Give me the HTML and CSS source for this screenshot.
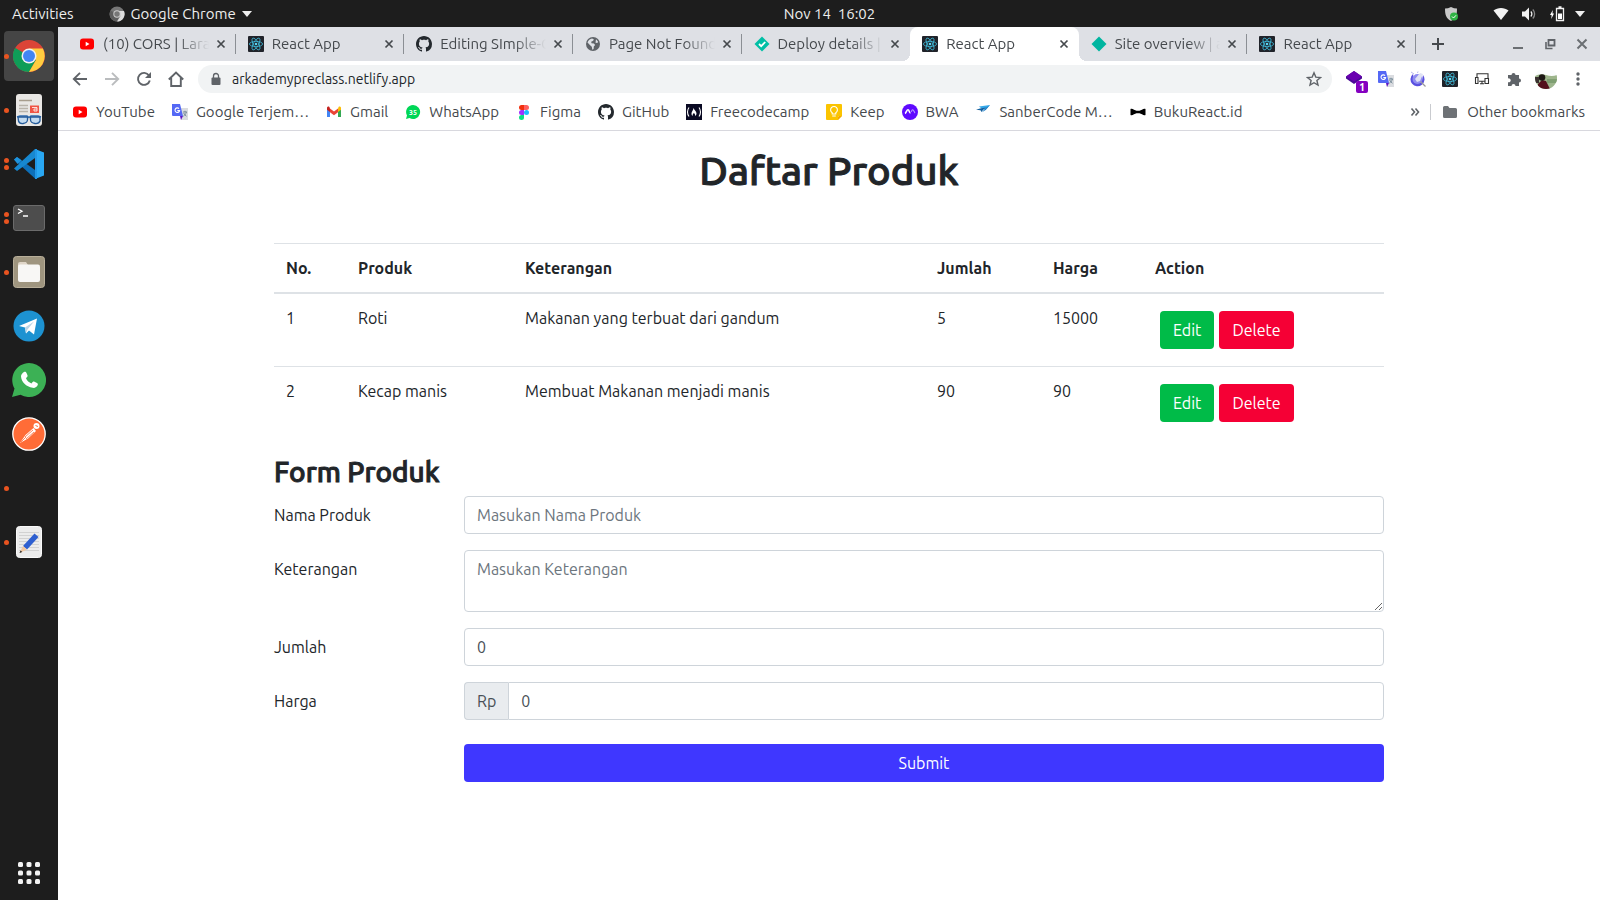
FILE: index.html
```html
<!DOCTYPE html>
<html lang="id">
<head>
<meta charset="utf-8">
<title>React App</title>
<link rel="stylesheet" href="styles.css">
</head>
<body>
<svg class="sprite" aria-hidden="true">
  <symbol id="i-youtube" viewBox="0 0 16 16"><rect x="1" y="2.500" width="14" height="11" rx="3" fill="#f00"/><path d="M6.700 5.800v4.400L10.500 8z" fill="#fff"/></symbol>
  <symbol id="i-react" viewBox="0 0 16 16"><rect width="16" height="16" rx="1" fill="#20232a"/><g fill="none" stroke="#3fb9d8" stroke-width=".8"><ellipse cx="8" cy="8" rx="6.600" ry="2.600"/><ellipse cx="8" cy="8" rx="6.600" ry="2.600" transform="rotate(60 8 8)"/><ellipse cx="8" cy="8" rx="6.600" ry="2.600" transform="rotate(120 8 8)"/></g><circle cx="8" cy="8" r="1.300" fill="#5ad4f2"/></symbol>
  <symbol id="i-github" viewBox="0 0 16 16"><path fill="#24292e" d="M8 0C3.580 0 0 3.580 0 8c0 3.540 2.290 6.530 5.470 7.590.4.070.55-.17.55-.38 0-.19-.01-.82-.01-1.490-2.010.37-2.530-.49-2.690-.94-.09-.23-.48-.94-.82-1.130-.28-.15-.68-.52-.01-.53.63-.01 1.080.58 1.230.82.72 1.210 1.870.87 2.330.66.07-.52.28-.87.51-1.070-1.780-.2-3.640-.89-3.640-3.950 0-.87.31-1.590.82-2.150-.08-.2-.36-1.020.08-2.120 0 0 .67-.21 2.200.82.64-.18 1.320-.27 2-.27s1.360.09 2 .27c1.530-1.040 2.200-.82 2.200-.82.44 1.100.16 1.920.08 2.120.51.56.82 1.270.82 2.150 0 3.070-1.870 3.750-3.650 3.950.29.25.54.73.54 1.480 0 1.070-.01 1.930-.01 2.200 0 .21.15.46.55.38A8.010 8.010 0 0 0 16 8c0-4.420-3.580-8-8-8z"/></symbol>
  <symbol id="i-globe" viewBox="0 0 16 16"><circle cx="8" cy="8" r="7" fill="#5f6368"/><path fill="#dee1e6" d="M2.500 6.500C3.300 4.200 5 3 7 2.600l1.800.7-.6 1.500-2 .9.300 1.500 2.400.2 1.200 1.600-1.300 1.500-.2 2.600-1.300.6-.5-3-1.900-1.700zM11 3.300l2 2.200-.5 1.600-2-.4z"/></symbol>
  <symbol id="i-netlify-ok" viewBox="0 0 16 16"><path d="M8 .5 15.500 8 8 15.500.5 8z" fill="#00bfa5"/><path d="m5 8 2.200 2.200 4-4.200" fill="none" stroke="#fff" stroke-width="1.800"/></symbol>
  <symbol id="i-netlify" viewBox="0 0 16 16"><path d="M8 .5 15.500 8 8 15.500.5 8z" fill="#00b5a0"/></symbol>
  <symbol id="i-close" viewBox="0 0 16 16"><path d="m4.500 4.500 7 7m0-7-7 7" fill="none" stroke="#45494d" stroke-width="1.700"/></symbol>
  <symbol id="i-translate" viewBox="0 0 16 16"><path d="M7 4h9v12H9z" fill="#dadce0"/><path d="M0 0h8l3 12H1a1 1 0 0 1-1-1z" fill="#5468f5"/><path d="M8 12h3l-2 4z" fill="#5c16c5"/><path d="M7 4.600a2.300 2.300 0 1 0 .6 2H5.300" fill="none" stroke="#fff" stroke-width="1.100"/><path d="M11 8h4m-2-1.200V8m1.400 0c-.5 2-1.600 3.200-3 4.200m.3-3.200c.6 1.400 1.600 2.500 2.800 3.200" fill="none" stroke="#6b8190" stroke-width=".9"/></symbol>
  <symbol id="i-gmail" viewBox="0 0 16 16"><path d="M1 4v9h3V6.500z" fill="#4285f4"/><path d="M15 4v9h-3V6.500z" fill="#34a853"/><path d="M12 4.500V8l3-2.300V4c0-1.300-1.500-1.900-2.400-1.100z" fill="#fbbc04"/><path d="M4 4.500v3.700l4 3 4-3V4.500L8 7.500z" fill="#ea4335"/><path d="M1 4v1.700L4 8V4.500l-.6-1.600C2.500 2.100 1 2.700 1 4z" fill="#c5221f"/></symbol>
  <symbol id="i-figma" viewBox="0 0 16 16"><path d="M8 1H5.500a2.500 2.500 0 0 0 0 5H8z" fill="#f2300e"/><path d="M8 1h2.500a2.500 2.500 0 0 1 0 5H8z" fill="#ff6060"/><path d="M8 6H5.500a2.500 2.500 0 0 0 0 5H8z" fill="#a030ff"/><circle cx="10.500" cy="8.500" r="2.500" fill="#1abcfe"/><path d="M8 11H5.500A2.500 2.500 0 1 0 8 13.500z" fill="#0ae083"/></symbol>
  <symbol id="i-fcc" viewBox="0 0 16 16"><path d="M0 0h16v16H0z" fill="#0a0a23"/><path d="M3 3.500C1 6 1 10 3 12.500m10-9c2 2.500 2 6.500 0 9" fill="none" stroke="#fff" stroke-width="1.100"/><path d="M7.500 4c.8 2 3 3.500 3 5.600 0 1.200-.6 1.900-1.400 2.400.2-1.500-.3-2.300-1.300-3-.8.800-1.300 1.800-1.200 3C5.800 11.500 5.500 10.600 5.500 9.600c0-2 1.700-2.800 2-5.600z" fill="#fff"/></symbol>
  <symbol id="i-keep" viewBox="0 0 16 16"><path d="M1 0h14a1 1 0 0 1 1 1v11l-4 4H1a1 1 0 0 1-1-1V1a1 1 0 0 1 1-1z" fill="#fbc400"/><path d="M16 12h-4v4z" fill="#fff"/><path d="M16 12h-3a1 1 0 0 0-1 1v3z" fill="#f5a900"/><path d="M6.200 10V8.800a3.400 3.400 0 1 1 3.600 0V10zM6.200 12h3.600" fill="none" stroke="#fff" stroke-width="1.100"/></symbol>
  <symbol id="i-bwa" viewBox="0 0 16 16"><circle cx="8" cy="8" r="8" fill="#5f0aff"/><path d="M3 9.500C4.200 9 4.700 5.800 6 5.800c1.300 0 1.300 3.200 2.500 3.200" fill="none" stroke="#fff" stroke-width="1.600"/><path d="M9.200 7.800c.6-1 .8-2 1.500-2 1 0 1.300 2.200 2.300 3.200" fill="none" stroke="#b79aff" stroke-width="1.100"/></symbol>
  <symbol id="i-sanber" viewBox="0 0 16 16"><path d="M4 2.500 15 1l-3 3-4.500 1.200z" fill="#35a8e8"/><path d="m1 5.800 4-1.300 6-1L8 6 6.500 8l-1-1.700z" fill="#14609f"/><path d="m15 1-5 3.500L7 8.200 11 5.800z" fill="#1c7fc8"/></symbol>
  <symbol id="i-bowtie" viewBox="0 0 16 16"><path d="M.5 5c2-1 4 1.500 6 1.800h3C11.500 6.500 13.500 4 15.500 5v6c-2 1-4-1.500-6-1.800h-3C4.500 9.500 2.500 12 .5 11z" fill="#000"/></symbol>
  <symbol id="i-folder" viewBox="0 0 16 16"><path d="M1 3.500A1.500 1.500 0 0 1 2.500 2H6l1.500 2h6A1.500 1.500 0 0 1 15 5.500v7a1.500 1.500 0 0 1-1.500 1.500h-11A1.500 1.500 0 0 1 1 12.500z" fill="#6e7276"/></symbol>
  <symbol id="i-chrome-ball" viewBox="0 0 32 32"><circle cx="16" cy="16" r="16" fill="#db4437"/><path d="M2.140 8A16 16 0 0 0 16 32l7-12.200L16 16z" fill="#0f9d58"/><path d="M16 32A16 16 0 0 0 29.860 8.500H16l7 11.500z" fill="#ffcd40"/><path d="M2.140 8 9.500 20 16 24l-1-8z" fill="#0f9d58"/><circle cx="16" cy="16" r="7.500" fill="#f1f1f1"/><circle cx="16" cy="16" r="6" fill="#4285f4"/></symbol>
</svg>

<div class="desktop">
  <header class="topbar">
    <div class="topbar-left">
      <button class="top-btn">Activities</button>
      <button class="top-btn top-app">
        <svg class="icon" viewBox="0 0 16 16"><circle cx="8" cy="8" r="7.500" fill="#777"/><path d="M1.500 4.500A7.500 7.500 0 0 0 8 15.500l3-6z" fill="#5d5d5d"/><path d="M8 15.500A7.500 7.500 0 0 0 15 5H8l3.500 5z" fill="#ddd"/><circle cx="8" cy="8" r="3.700" fill="#ccc"/><circle cx="8" cy="8" r="2.700" fill="#777"/></svg>
        Google Chrome
        <svg class="caret" viewBox="0 0 10 6"><path d="M0 0h10L5 6z" fill="#eee"/></svg>
      </button>
    </div>
    <time class="clock">Nov 14&nbsp; 16:02</time>
    <div class="topbar-right">
      <svg class="icon tray-shield" viewBox="0 0 16 16"><path d="M8 1c2 1 4 1.500 6 1.500 0 6-1 10-6 12.500C3 12.500 2 8.500 2 2.500 4 2.500 6 2 8 1z" fill="#c9c9c9"/><circle cx="11" cy="10.500" r="4" fill="#2fb344"/><path d="m9 10.500 1.500 1.500 2.500-2.700" fill="none" stroke="#fff"/></svg>
      <svg class="icon" viewBox="0 0 16 16"><path d="M.5 4.500C4.500 1 11.500 1 15.500 4.500L8 14z" fill="#f2f2f2"/></svg>
      <svg class="icon" viewBox="0 0 16 16"><path d="M1 5.500h3l4-4v13l-4-4H1z" fill="#f2f2f2"/><path d="M9.800 5.500a3.500 3.500 0 0 1 0 5" fill="none" stroke="#f2f2f2" stroke-width="1.300"/><path d="M11.800 3.500a6.500 6.500 0 0 1 0 9" fill="none" stroke="#888" stroke-width="1.300"/></svg>
      <svg class="icon" viewBox="0 0 16 16"><path d="M7.500 2.500h7v12h-7zM9.500 1h3" fill="none" stroke="#f2f2f2" stroke-width="1.300"/><path d="M9 7.500h4V13H9z" fill="#fff"/><path d="M3.800 4 1 9h1.600l-.3 4L5 7.500H3.500z" fill="#fff"/></svg>
      <svg class="caret tray-caret" viewBox="0 0 10 6"><path d="M0 0h10L5 6z" fill="#eee"/></svg>
    </div>
  </header>

  <nav class="dock" aria-label="Dock">
    <button class="dock-item dock-active" aria-label="Google Chrome"><span class="dots"><i></i></span><svg class="app" viewBox="0 0 32 32"><use href="#i-chrome-ball"/></svg></button>
    <button class="dock-item" aria-label="Document viewer"><span class="dots"><i></i></span>
      <svg class="app" viewBox="0 0 32 32"><rect x="3" width="26" height="32" rx="3" fill="#e9e7e4"/><path d="M6 6.500h13" stroke="#a79d8d" stroke-width="1.500"/><path d="M6 11.500h9m-9 3h9m-9 3h9" stroke="#b9b4aa" stroke-width="1.300"/><path d="M17 11.500h9v7.500h-9z" fill="#f05545"/><path d="M19 13.500h5v3.500h-3v-2h3" fill="none" stroke="#fff" stroke-width=".8"/><path d="m4 23 3-1h7l2 1.500L18 22h7l3 1" fill="none" stroke="#2e6cb0" stroke-width="1.500"/><path d="M5 23h9.500v3c-.5 4-8 5-9 1zM17.500 23H27v4c-1.500 4-9 3-9.500-1z" fill="#c3dbf0" stroke="#245b9a" stroke-width="1.300"/></svg></button>
    <button class="dock-item" aria-label="Visual Studio Code"><span class="dots"><i></i><i></i></span>
      <svg class="app" viewBox="0 0 32 32"><path d="M1 11.500 4 9l18 13v8.500z" fill="#0d6fb8"/><path d="M1 20.500 4 23 22 10V1z" fill="#1788d0"/><path d="M1 11.500 4 9l4.500 3.300-4 3.700z" fill="#1e93dc"/><path d="M22 1 31 4.500v23L22 31z" fill="#29a7f2"/><path d="M22 1v30l2 0V1z" fill="#2196e4"/></svg></button>
    <button class="dock-item" aria-label="Terminal"><span class="dots"><i></i><i></i></span>
      <svg class="app" viewBox="0 0 32 32"><rect x=".5" y="3.500" width="31" height="25" rx="2.500" fill="#4d4d4d" stroke="#6b6b6b"/><path d="m5 7 4 2.300L5 11.500M10 14h5" fill="none" stroke="#fff" stroke-width="1.300"/></svg></button>
    <button class="dock-item" aria-label="Files"><span class="dots"><i></i></span>
      <svg class="app" viewBox="0 0 32 32"><rect x=".5" y=".5" width="31" height="31" rx="3" fill="#9f957f" stroke="#b8ae99"/><path d="M5 8q0-2 2-2h6l2 3v5H5z" fill="#e0d6c8"/><rect x="5" y="8.500" width="22" height="17.500" rx="2" fill="#f8f7f5"/></svg></button>
    <button class="dock-item" aria-label="Telegram"><span class="dots"></span>
      <svg class="app" viewBox="0 0 32 32"><circle cx="16" cy="16" r="15.500" fill="#1d92d1"/><path d="m6 16 18-7.500-3 16-5-4-3 3-1-6z" fill="#fff"/><path d="m12 17.500 9-6-6.500 8-1.500 4z" fill="#bcd5e6"/></svg></button>
    <button class="dock-item" aria-label="WhatsApp"><span class="dots"></span>
      <svg class="app app-wide" viewBox="0 0 34 34"><path d="M17 0a17 17 0 1 1-8.500 31.700L0 34l2.500-8.500A17 17 0 0 1 17 0z" fill="#3cb155"/><path d="M12 9c1-.7 2-.3 2.500 1l1 2.300c.3 1-.2 1.700-1.500 3 1 2.500 3 4.300 5.500 5.200 1.300-1.800 2-2.200 3-1.700l2.500 1.200c1 .5 1 1.200.7 2-.7 2-3 3.200-5 2.800C14 23.700 9.500 19 9 13.500 9 11.500 10.500 10 12 9z" fill="#fff"/></svg></button>
    <button class="dock-item" aria-label="Postman"><span class="dots"></span>
      <svg class="app app-wide" viewBox="0 0 34 34"><circle cx="17" cy="17" r="16.200" fill="#ff6c37" stroke="#fff" stroke-width="1.300"/><circle cx="24.500" cy="9" r="3" fill="#fff"/><path d="m8 26 5.500-8 8-7 2.500 3-8 7.500z" fill="#fff"/><path d="m13 20 8-7m-7 9 8-7M9 25l5-5" stroke="#ff6c37" stroke-width=".8"/><path d="m23.500 8.500 2.500 1" stroke="#ff6c37"/></svg></button>
    <button class="dock-item" aria-label="Running application"><span class="dots"><i></i></span></button>
    <button class="dock-item" aria-label="Text editor"><span class="dots"><i></i></span>
      <svg class="app" viewBox="0 0 32 32"><rect x="3.500" y=".5" width="25" height="31" rx="3" fill="#ececec" stroke="#fafafa"/><path d="M6 6.500h20M6 9.500h20M6 12.500h20M6 15.500h20M6 18.500h20M6 21.500h20M6 24.500h20" stroke="#d2d2d2"/><path d="m10 20 11.500-12.500 4 3.500-11.500 12.500z" fill="#2e5fd0"/><path d="m10 20 4 3.500L6.500 27z" fill="#f1c7a0"/><path d="m7.600 24.500 1.600 1.400-2.700 1.100z" fill="#222"/></svg></button>
    <button class="dock-item dock-apps" aria-label="Show applications">
      <svg class="app" viewBox="0 0 32 32" fill="#f2f2f2"><rect x="5" y="5" width="5" height="5" rx="1.500"/><rect x="13.500" y="5" width="5" height="5" rx="1.500"/><rect x="22" y="5" width="5" height="5" rx="1.500"/><rect x="5" y="13.500" width="5" height="5" rx="1.500"/><rect x="13.500" y="13.500" width="5" height="5" rx="1.500"/><rect x="22" y="13.500" width="5" height="5" rx="1.500"/><rect x="5" y="22" width="5" height="5" rx="1.500"/><rect x="13.500" y="22" width="5" height="5" rx="1.500"/><rect x="22" y="22" width="5" height="5" rx="1.500"/></svg></button>
  </nav>

  <div class="browser">
    <div class="tabstrip">
      <div class="tabs">
        <div class="tab"><svg class="icon"><use href="#i-youtube"/></svg><span class="tab-title">(10) CORS | Laravel</span><button class="tab-close" aria-label="Close tab"><svg class="icon"><use href="#i-close"/></svg></button></div>
        <div class="tab"><svg class="icon"><use href="#i-react"/></svg><span class="tab-title">React App</span><button class="tab-close" aria-label="Close tab"><svg class="icon"><use href="#i-close"/></svg></button></div>
        <div class="tab"><svg class="icon"><use href="#i-github"/></svg><span class="tab-title">Editing SImple-CRUD</span><button class="tab-close" aria-label="Close tab"><svg class="icon"><use href="#i-close"/></svg></button></div>
        <div class="tab"><svg class="icon"><use href="#i-globe"/></svg><span class="tab-title">Page Not Found</span><button class="tab-close" aria-label="Close tab"><svg class="icon"><use href="#i-close"/></svg></button></div>
        <div class="tab tab-before"><svg class="icon"><use href="#i-netlify-ok"/></svg><span class="tab-title">Deploy details | ark</span><button class="tab-close" aria-label="Close tab"><svg class="icon"><use href="#i-close"/></svg></button></div>
        <div class="tab tab-current"><svg class="icon"><use href="#i-react"/></svg><span class="tab-title">React App</span><button class="tab-close" aria-label="Close tab"><svg class="icon"><use href="#i-close"/></svg></button></div>
        <div class="tab"><svg class="icon"><use href="#i-netlify"/></svg><span class="tab-title">Site overview | ark</span><button class="tab-close" aria-label="Close tab"><svg class="icon"><use href="#i-close"/></svg></button></div>
        <div class="tab"><svg class="icon"><use href="#i-react"/></svg><span class="tab-title">React App</span><button class="tab-close" aria-label="Close tab"><svg class="icon"><use href="#i-close"/></svg></button></div>
      </div>
      <button class="new-tab" aria-label="New tab"><svg class="icon" viewBox="0 0 16 16"><path d="M8 2v12M2 8h12" stroke="#45494d" stroke-width="2"/></svg></button>
      <div class="window-controls">
        <button aria-label="Minimize"><svg class="icon" viewBox="0 0 16 16"><path d="M3 12h10" stroke="#6b6f73" stroke-width="2"/></svg></button>
        <button aria-label="Restore"><svg class="icon" viewBox="0 0 16 16"><path d="M6.500 4h6v5.500h-6z" fill="none" stroke="#5f6368" stroke-width="1.800"/><path d="M4 6v6.500h6.500" fill="none" stroke="#5f6368" stroke-width="1.600"/></svg></button>
        <button aria-label="Close"><svg class="icon" viewBox="0 0 16 16"><path d="m3.500 3.500 9 9m0-9-9 9" stroke="#6b6f73" stroke-width="2"/></svg></button>
      </div>
    </div>

    <div class="toolbar">
      <button class="tool" aria-label="Back"><svg class="icon" viewBox="0 0 16 16"><path d="M15 8H2m6-6.200L1.800 8 8 14.200" fill="none" stroke="#5f6368" stroke-width="1.900"/></svg></button>
      <button class="tool" aria-label="Forward"><svg class="icon" viewBox="0 0 16 16"><path d="M1 8h13M8 1.800 14.200 8 8 14.200" fill="none" stroke="#babcbe" stroke-width="1.900"/></svg></button>
      <button class="tool" aria-label="Reload"><svg class="icon" viewBox="0 0 16 16"><path d="M13 4.500A6 6 0 1 0 13.800 9.500" fill="none" stroke="#5f6368" stroke-width="1.900"/><path d="M15 1v6H9z" fill="#5f6368"/></svg></button>
      <button class="tool" aria-label="Home"><svg class="icon" viewBox="0 0 16 16"><path d="M.8 8.500 8 1.500l7.200 7M3.200 7v8h9.600V7" fill="none" stroke="#5f6368" stroke-width="1.900"/></svg></button>
      <div class="omnibox">
        <svg class="icon" viewBox="0 0 16 16"><path d="M5 6.500h6.500a1 1 0 0 1 1 1V13a1 1 0 0 1-1 1h-7a1 1 0 0 1-1-1V7.500a1 1 0 0 1 1-1z" fill="#5f6368"/><path d="M5.500 7V5a2.500 2.500 0 0 1 5 0v2" fill="none" stroke="#5f6368" stroke-width="1.300"/></svg>
        <input class="url" aria-label="Address" value="arkademypreclass.netlify.app">
        <button class="star" aria-label="Bookmark"><svg class="icon" viewBox="0 0 16 16"><path d="m8 1.800 1.800 4.300 4.700.4-3.600 3 1.100 4.600L8 11.700 4 14.100l1.100-4.600-3.600-3 4.700-.4z" fill="none" stroke="#5f6368" stroke-width="1.400"/></svg></button>
      </div>
      <button class="tool tool-badged" aria-label="Extension"><svg class="icon" viewBox="0 0 16 16"><path d="m8 0 8 5.500v2L8 13 0 7.500v-2z" fill="#4a0a96"/><path d="m8 0 8 5.500L8 10.500 0 5.500z" fill="#6a00b0"/></svg><span class="badge">1</span></button>
      <button class="tool" aria-label="Google Translate"><svg class="icon"><use href="#i-translate"/></svg></button>
      <button class="tool" aria-label="Search helper"><svg class="icon" viewBox="0 0 16 16"><path d="M3 3a7 7 0 1 0 10 1l-1 5-4 3-4-3z" fill="#5a50e0"/><circle cx="7.500" cy="8" r="5" fill="#8f8cf0"/><path d="m5 8 5-6 3 1-3 7-3 1z" fill="#dfe2f4"/><path d="m1 1 3 2M8 .5 7.500 2" stroke="#b8b8f0"/><path d="m10.500 10.500 5 5" stroke="#999" stroke-width="1.300"/></svg></button>
      <button class="tool" aria-label="React tools"><svg class="icon"><use href="#i-react"/></svg></button>
      <button class="tool" aria-label="Responsive viewer"><svg class="icon" viewBox="0 0 16 16"><path d="M3 6V2.700h11V7M5 10.300h5.500M1.500 6.500H4v6H1.500zM11 7.500h3.500v5H11zM8 10.300v2m-2 .5h4" fill="none" stroke="#333" stroke-width="1.100"/></svg></button>
      <button class="tool" aria-label="Extensions"><svg class="icon" viewBox="0 0 16 16"><path d="M2 4h3.500a2 2 0 1 1 4 0H13v3.500a2 2 0 1 1 0 4V15H9.500a2 2 0 1 0-4 0H2v-3.800a2 2 0 1 0 0-3.700z" fill="#5f6368"/></svg></button>
      <button class="tool" aria-label="Profile"><svg class="avatar" viewBox="0 0 22 22"><clipPath id="round"><circle cx="11" cy="8" r="11"/></clipPath><g clip-path="url(#round)"><path d="M0 0h22v22H0z" fill="#fafcfd"/><path d="M0 6q5-3 11-1t11 0v17H0z" fill="#9db58c"/><path d="M12 9h10v4H12z" fill="#7f9f72"/><path d="M3 22v-8l4-4 4 1 4 8v3z" fill="#54101c"/><circle cx="7" cy="7.500" r="3.300" fill="#1b1614"/><path d="M0 7h4v6H0z" fill="#3a3030"/></g></svg></button>
      <button class="tool" aria-label="Menu"><svg class="icon" viewBox="0 0 16 16" fill="#5f6368"><circle cx="8" cy="3" r="1.700"/><circle cx="8" cy="8" r="1.700"/><circle cx="8" cy="13" r="1.700"/></svg></button>
    </div>

    <nav class="bookmarks" aria-label="Bookmarks">
      <a href="#"><svg class="icon"><use href="#i-youtube"/></svg>YouTube</a>
      <a href="#"><svg class="icon"><use href="#i-translate"/></svg>Google Terjem…</a>
      <a href="#"><svg class="icon"><use href="#i-gmail"/></svg>Gmail</a>
      <a href="#"><svg class="icon" viewBox="0 0 16 16"><path d="M8 1a7 7 0 1 1-3.500 13L1 15l1-3.500A7 7 0 0 1 8 1z" fill="#00d757"/><text x="8" y="10.600" font-size="7" font-weight="700" text-anchor="middle" fill="#fff">35</text></svg>WhatsApp</a>
      <a href="#"><svg class="icon"><use href="#i-figma"/></svg>Figma</a>
      <a href="#"><svg class="icon"><use href="#i-github"/></svg>GitHub</a>
      <a href="#"><svg class="icon"><use href="#i-fcc"/></svg>Freecodecamp</a>
      <a href="#"><svg class="icon"><use href="#i-keep"/></svg>Keep</a>
      <a href="#"><svg class="icon"><use href="#i-bwa"/></svg>BWA</a>
      <a href="#"><svg class="icon"><use href="#i-sanber"/></svg>SanberCode M…</a>
      <a href="#"><svg class="icon"><use href="#i-bowtie"/></svg>BukuReact.id</a>
      <button class="more" aria-label="More bookmarks"><svg class="icon" viewBox="0 0 16 16"><path d="m4.500 4.500 3 3.500-3 3.500m4-7 3 3.500-3 3.500" fill="none" stroke="#5f6368" stroke-width="1.600"/></svg></button>
      <a href="#" class="other"><svg class="icon"><use href="#i-folder"/></svg>Other bookmarks</a>
    </nav>

    <main class="page">
      <div class="container">
        <h1 class="title">Daftar Produk</h1>
        <table class="products">
          <colgroup><col class="c-no"><col class="c-name"><col><col class="c-qty"><col class="c-price"><col class="c-action"></colgroup>
          <thead><tr><th>No.</th><th>Produk</th><th>Keterangan</th><th>Jumlah</th><th>Harga</th><th>Action</th></tr></thead>
          <tbody>
            <tr><td>1</td><td>Roti</td><td>Makanan yang terbuat dari gandum</td><td>5</td><td>15000</td><td><div class="actions"><button class="btn btn-edit">Edit</button><button class="btn btn-delete">Delete</button></div></td></tr>
            <tr><td>2</td><td>Kecap manis</td><td>Membuat Makanan menjadi manis</td><td>90</td><td>90</td><td><div class="actions"><button class="btn btn-edit">Edit</button><button class="btn btn-delete">Delete</button></div></td></tr>
          </tbody>
        </table>

        <h3 class="subtitle">Form Produk</h3>
        <form class="form">
          <label for="nama">Nama Produk</label>
          <input class="control" id="nama" type="text" placeholder="Masukan Nama Produk">
          <label for="ket">Keterangan</label>
          <textarea class="control" id="ket" rows="2" placeholder="Masukan Keterangan"></textarea>
          <label for="jumlah">Jumlah</label>
          <input class="control" id="jumlah" type="number" value="0">
          <label for="harga">Harga</label>
          <div class="group"><span class="prefix">Rp</span><input class="control" id="harga" type="number" value="0"></div>
          <button class="btn btn-submit" type="button">Submit</button>
        </form>
      </div>
    </main>
  </div>
</div>
</body>
</html>
```
FILE: styles.css
```css
*,
*::before,
*::after {
  box-sizing: border-box;
}

body {
  margin: 0;
  font-family: Ubuntu, "Noto Sans", "Open Sans", sans-serif;
  font-size: 15px;
  line-height: 24px;
  color: #212529;
  background: #fff;
}

button,
input,
textarea {
  font: inherit;
  color: inherit;
}

button {
  padding: 0;
  border: 0;
  background: none;
}

svg {
  display: block;
  flex: none;
}

.sprite {
  position: absolute;
  width: 0;
  height: 0;
}

.icon {
  width: 16px;
  height: 16px;
}

.desktop {
  display: grid;
  grid-template: 27px 1fr / 58px minmax(0, 1fr);
  min-height: 100vh;
}

/* System bar */
.topbar {
  grid-column: 1 / -1;
  display: flex;
  align-items: center;
  background: #1d1d1d;
  color: #eee;
}

.topbar-left,
.topbar-right {
  display: flex;
  align-items: center;
}

.topbar-left {
  flex: 1 1 64px;
  gap: 35px;
  padding-left: 12px;
}

.topbar-right {
  flex: 1 1 0;
  justify-content: flex-end;
  gap: 12px;
  padding-right: 15px;
}

.clock {
  padding-left: 10px;
}

.top-app {
  display: flex;
  align-items: center;
  gap: 6px;
}

.caret {
  width: 10px;
  height: 6px;
}

.tray-shield {
  margin-right: 22px;
}

.tray-caret {
  margin-left: -2px;
}

/* Dock */
.dock {
  display: flex;
  flex-direction: column;
  gap: 4px;
  padding: 4px 4px 2px;
  background: #1d1d1d;
}

.dock-item {
  position: relative;
  display: flex;
  align-items: center;
  justify-content: center;
  height: 50px;
  border-radius: 4px;
}

.dock-active {
  background: #454545;
}

.dock-apps {
  margin-top: auto;
}

.app {
  width: 32px;
  height: 32px;
}

.app-wide {
  width: 34px;
  height: 34px;
}

.dots {
  position: absolute;
  top: 0;
  bottom: 0;
  left: 0;
  display: flex;
  flex-direction: column;
  justify-content: center;
  gap: 2px;
}

.dots i {
  width: 5px;
  height: 5px;
  border-radius: 50%;
  background: #e95420;
}

/* Browser window */
.browser {
  display: flex;
  flex-direction: column;
}

.tabstrip {
  display: flex;
  align-items: center;
  height: 34px;
  padding-left: 9px;
  background: #dee0e5;
  color: #45494d;
}

.tabs {
  flex: 1;
  display: flex;
  min-width: 0;
  height: 34px;
}

.tab {
  position: relative;
  flex: 1 1 0;
  display: flex;
  align-items: center;
  min-width: 0;
  padding: 0 7px 0 12px;
}

.tab::after {
  content: "";
  position: absolute;
  top: 7px;
  right: 0;
  width: 1px;
  height: 20px;
  background: #8b8f94;
}

.tab-before::after {
  display: none;
}

.tab-title {
  flex: 1;
  min-width: 0;
  margin: 0 4px 0 8px;
  overflow: hidden;
  white-space: nowrap;
  mask-image: linear-gradient(to left, transparent, #000 32px);
}

.tab-current {
  border-radius: 8px 8px 0 0;
  background: #fff;
}

.tab-current::before,
.tab-current::after {
  content: "";
  position: absolute;
  top: auto;
  bottom: 0;
  width: 8px;
  height: 8px;
}

.tab-current::before {
  right: 100%;
  background: radial-gradient(circle at 0 0, transparent 8px, #fff 8px);
}

.tab-current::after {
  right: auto;
  left: 100%;
  background: radial-gradient(circle at 100% 0, transparent 8px, #fff 8px);
}

.new-tab {
  margin-left: 14px;
}

.window-controls {
  display: flex;
  gap: 16px;
  margin: 0 10px 0 64px;
}

.toolbar {
  display: flex;
  align-items: center;
  height: 36px;
  padding: 0 6px;
}

.tool {
  display: flex;
  justify-content: center;
  width: 32px;
}

.tool-badged {
  position: relative;
}

.badge {
  position: absolute;
  top: 10px;
  left: 18px;
  width: 12px;
  height: 12px;
  border-radius: 2px;
  background: #8400c0;
  color: #fff;
  font-size: 11px;
  font-weight: 700;
  line-height: 12px;
}

.avatar {
  width: 22px;
  height: 22px;
  margin: -1px 0 -5px;
}

.omnibox {
  flex: 1;
  display: flex;
  align-items: center;
  height: 28px;
  margin: 0 6px;
  padding: 0 10px;
  border-radius: 14px;
  background: #f1f3f4;
}

.url {
  flex: 1;
  min-width: 0;
  margin-left: 8px;
  padding: 0;
  border: 0;
  outline: 0;
  background: none;
  font-size: 14px;
}

.bookmarks {
  display: flex;
  align-items: center;
  gap: 17px;
  height: 34px;
  padding: 0 15px 4px 14px;
  border-bottom: 1px solid #d8d8de;
  color: #45494d;
}

.bookmarks a {
  display: flex;
  align-items: center;
  gap: 8px;
  color: inherit;
  text-decoration: none;
  white-space: nowrap;
}

.more {
  margin-left: auto;
  margin-right: -10px;
}

.bookmarks .other {
  gap: 9px;
  padding-left: 12px;
  background: linear-gradient(#c9cbcf, #c9cbcf) 0 50% / 1px 16px no-repeat;
}

/* Product page */
.page {
  flex: 1;
  font-size: 16px;
}

.container {
  max-width: 1140px;
  margin: 0 auto;
  padding: 16px 15px;
}

.title,
.subtitle {
  margin: 0;
  font-weight: 500;
  -webkit-text-stroke: 1px currentColor;
}

.title {
  margin-bottom: 48px;
  font-size: 40px;
  line-height: 48px;
  text-align: center;
}

.subtitle {
  margin-bottom: 8px;
  font-size: 28px;
  line-height: 33px;
}

.products {
  width: 100%;
  margin-bottom: 16px;
  border-collapse: collapse;
  table-layout: fixed;
}

.c-no { width: 72px; }
.c-name { width: 167px; }
.c-qty { width: 116px; }
.c-price { width: 102px; }
.c-action { width: 241px; }

.products th,
.products td {
  padding: 12px;
  border-top: 1px solid #dee2e6;
  text-align: left;
  vertical-align: top;
}

.products thead th {
  border-bottom: 2px solid #dee2e6;
}

.actions {
  display: flex;
  gap: 5px;
  padding: 5px;
}

.btn {
  height: 38px;
  padding: 0 13px;
  border-radius: 4px;
  color: #fff;
}

.btn-edit { background: #00bb48; }
.btn-delete { background: #f50035; }

.form {
  display: grid;
  grid-template-columns: calc((100% + 30px) / 6) 1fr;
  row-gap: 16px;
}

.form label {
  padding-top: 7px;
}

.control {
  width: 100%;
  height: 38px;
  padding: 6px 12px;
  border: 1px solid #ced4da;
  border-radius: 4px;
  background: #fff;
  color: #495057;
  appearance: textfield;
}

.control::placeholder {
  color: #6c757d;
  opacity: 1;
}

textarea.control {
  display: block;
  height: 62px;
}

.group {
  display: flex;
}

.group .control {
  flex: 1;
  border-radius: 0 4px 4px 0;
}

.prefix {
  padding: 6px 12px;
  border: 1px solid #ced4da;
  border-right: 0;
  border-radius: 4px 0 0 4px;
  background: #e9ecef;
  color: #495057;
}

.btn-submit {
  grid-column: 2;
  margin-top: 8px;
  background: #3f37ff;
}
```
